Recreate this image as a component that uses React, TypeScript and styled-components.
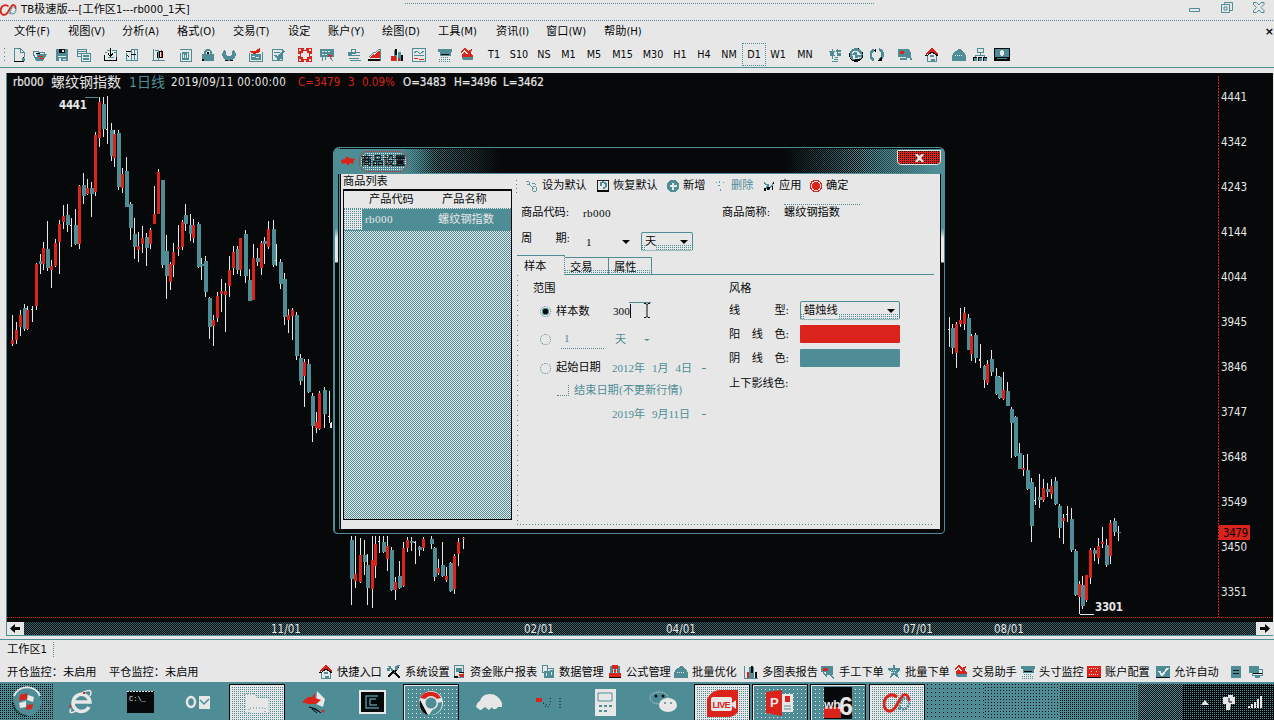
import React from 'react';
import styled, { createGlobalStyle, css } from 'styled-components';

const INK = '#060809';
const TEAL = '#4f8d96';
const PAPER = '#e7e7e7';
const RED = '#da231b';
const checker = (a: string, b: string) =>
  `repeating-conic-gradient(${a} 0 25%, ${b} 0 50%) 0 0 / 2px 2px`;
const dots = (c: string, size: number) =>
  `conic-gradient(at 1px 1px, transparent 75%, ${c} 0) 0 0 / ${size}px ${size}px`;
const dotLine = (c: string) => `repeating-linear-gradient(90deg, ${c} 0 1px, transparent 1px 2px)`;
const dotColumn = (c: string) => `repeating-linear-gradient(180deg, ${c} 0 1px, transparent 1px 2px)`;
const UI = "'DejaVu Sans Condensed', 'Noto Sans CJK SC', sans-serif";
const DIGITS = "11.2px/14px 'Liberation Serif', 'Noto Sans CJK SC', serif";

const Global = createGlobalStyle`
  * { box-sizing: border-box; }
  body { margin: 0; overflow: hidden; background: ${PAPER}; }
`;

/* ---------- icons ---------- */

const T = (d: string) => <path d={d} fill={TEAL} />;
const K = (d: string) => <path d={d} fill={INK} />;
const R = (d: string) => <path d={d} fill={RED} />;
const W = (d: string) => <path d={d} fill={PAPER} />;
const L = (d: string, c = TEAL, w = 1) => <path d={d} fill="none" stroke={c} strokeWidth={w} />;

const icons: Record<string, React.ReactNode> = {
  newFile: <>{L('M3.500 14.500v-13h6l4 4v4')}{L('M9.500 1.500v4h4')}{L('M3 14.500h9.500v-5', INK)}{T('M11 11h3v3h-3z')}</>,
  open: <>{L('M1.500 8v-4h4l1 1h6v3')}{K('M3 6h4l2 1h-4z')}{T('M1 8h2v2h2v-3h10l-4 7h-7z')}{R('M6 9h5v1h-5zM8 11h4v1h-4z')}</>,
  save: <>{T('M2 2h12v12h-12z')}{K('M5 2h6v4h-6z')}{W('M8 3h2v2h-2zM4 9h8v1H4z')}{W('M5 11h2v3h-2zM9 12h3v1H9z')}</>,
  copy: <>{L('M1.500 2.500h9v7h-9z', TEAL, 1)}{L('M2 4.500h8M2 6.500h8')}<rect x="5.500" y="6.500" width="9" height="8" fill={PAPER} stroke={TEAL} />{T('M7 8h6v2h-6zM7 11h6v2h-6z')}</>,
  inTray: <>{L('M1.500 8v5.500h12V8', INK)}{L('M2 5.500h2M11 5.500h3M3.500 3.500h3M9 3.500h4v6')}{L('M7.500 1v8M5 6.500l2.500 3l2.500-3', INK)}{T('M5 10h6v1h-6z')}</>,
  panes: <>{L('M1.500 4.500h6M2 7l3 3', INK)}{L('M7.500 2.500h6v11h-6zM10.500 3v11M2.500 6v7h5')}{K('M7 7h5v1h-5z')}</>,
  bars: <>{L('M2.500 2v12M1 13.500h13M4 3h3v10')}{R('M10 3h1v8h-1z')}{L('M8.500 4.500h3v6h-3z', INK)}{L('M6.500 5v6', INK)}</>,
  grid: <>{L('M2 2.500h11.500v12')}{L('M2.500 6v8h10')}{T('M4 5h7v8h-7z')}{W('M5 7h1v4h-1zM7 8h1v3h-1zM9 6h1v5H9z')}</>,
  lock: <>{T('M2 7h12v7H2z')}{T('M4 8V5l2-3h4l2 3v3h-2V5L9 4H7L6 5v3z')}{K('M7 5h2v2h-2zM2 12h2v2h-2z')}</>,
  ring: <>{T('M3 3Q-1 9 4 13q4 3 8 0 5-4 1-10l-2 1q1 5-3 5t-3-5z')}{K('M4 13h3v1H4zM9 13h3v1H9z')}</>,
  edit: <>{R('M1 4h6l5-3v4l-6 2z')}{L('M1.500 6v8h13V5')}{T('M3 7h10v6H3z')}{W('M4 9h3v1h-3zM8 10h3v1h-3z')}</>,
  note: <>{L('M2.500 2.500h10v11h-10z')}{L('M4 5.500h6M4 8.500h3')}{L('M7 11l7-7M5 8l4 5', TEAL, 2)}{T('M9 8h4v4H9z')}</>,
  flower: <>{R('M1 1h14v14H1z')}<g fill={PAPER}><rect x="6" y="4" width="4" height="8" /><rect x="4" y="6" width="8" height="4" /><circle cx="3" cy="3" r=".7" /><circle cx="8" cy="2" r=".7" /><circle cx="13" cy="3" r=".7" /><circle cx="2" cy="8" r=".7" /><circle cx="14" cy="8" r=".7" /><circle cx="3" cy="13" r=".7" /><circle cx="8" cy="14" r=".7" /><circle cx="13" cy="13" r=".7" /></g></>,
  board: <>{T('M1 2h14v8H1z')}{W('M3 4h2v1H3zM6 4h2v1H6zM9 4h2v1H9zM3 7h2v1H3zM6 7h2v1H6z')}{R('M9 8h4v2H9z')}{L('M10 9l4 5M3.500 10v4M6.500 10v3')}</>,
  slider: <>{L('M5 2.500h4v4H5zM2 5.500h12M2 8.500h12M3 11.500h10M3.500 13.500h11')}{T('M2 6h4v3H2z')}</>,
  area: <>{K('M1 12h13v2H1z')}{R('M2 11l4-4 2 1 3-4h2v7z')}{L('M2 10l4-4 3-1 3-3h1.500v12')}</>,
  histogram: <>{T('M5 3h3v11H5zM9 5h3v9H9z')}{K('M6 2h2v6H6zM12 8h2v6h-2z')}{R('M2 9h5v5H2zM9 11h2v3H9z')}</>,
  trend: <>{L('M1.500 1.500h13v13h-13z')}{L('M3 6l3-2 3 3 4-3M3 8.500h10')}{R('M3 11h4v1H3zM8 12h5v1H8z')}</>,
  screen: <>{T('M1 2h14v3H1zM3 5h11v4H3z')}{K('M4 7h8v1H4z')}<path d="M4 10.500h8M2 12.500h12M2 14.500h12" stroke={TEAL} strokeDasharray="1 1" /></>,
  heart: <>{L('M2 5l4-3 3 3 4-2', RED, 1.500)}{R('M3 7l2-2 3 3 3-4 3 5v1H3z')}{T('M3 10h11v3H4z')}</>,
  transfer: <>{L('M5.500 2v10M2 4.500h6M3 8h5M8 10h3M10 2v6h4')}{T('M3 5h4v4H3zM9 3h5v2H9zM10 6h4v3h-4z')}{L('M5 14.500h6M7 12.500h4')}</>,
  refresh: <>{K('M8 1a7 7 0 1 0 .1 0')}{T('M8 1a6.500 6.500 0 1 0 .1 0')}{L('M4 6a5 4 0 0 1 6-1M12 10a5 4 0 0 1-7 1', PAPER, 1.500)}{W('M9 3v5h4zM3 8h4v4z')}{K('M7 12h5v2H6z')}</>,
  sync: <>{L('M5 3a5.500 5.500 0 0 0 0 10M10 2.500a5.500 5.500 0 0 1 1 10', TEAL, 2.500)}{K('M4 3l3-1 0 3zM8 14l5-4v4z')}</>,
  chartUser: <>{T('M1 2h11v8H1z')}{R('M3 4h4v3H3z')}{L('M12 3l-3 10M12 6l2 7M3 12h5', TEAL, 2)}{T('M10 5h4v6h-4z')}</>,
  home: <>{R('M2 6l6-5 6 5v2l-6-3-6 3z')}{L('M1 8h3l4-3 6 4', INK)}{L('M3.500 9v5h9V9')}{T('M6 8h4v2H6zM7 12h4v2H7z')}</>,
  cap: <>{T('M1 14V10q1-5 4-6l2-2h2l2 2q3 1 4 6v4z')}<path d="M4 8.500h8" stroke={PAPER} strokeDasharray="1 1" /></>,
  network: <>{L('M5 1.500h6v4H5zM8 5v3M3.500 10V8.500h9V10')}{K('M1 10h4v4H1zM6 10h4v4H6zM11 10h4v4h-4z')}{T('M2 11h3v3H2zM7 11h3v3H7zM12 11h3v3h-3z')}</>,
  monitor: <>{K('M0 1h16v13H0z')}{T('M1 2h14v8H1z')}{W('M6 4h4v4H6zM7 3h2v6H7z')}{T('M3 11h10v1H3z')}</>,
  tools: <>{L('M3 2l4 5M13 1L9 7l-1 3', TEAL, 2)}{L('M2 13l6-6M9 9l5 5M12 3l-3 5', INK, 1.500)}{T('M9 2h3v4H9zM1 4h3v3H1z')}</>,
  report: <>{L('M3.500 1.500h9v12h-9z', TEAL, 1.500)}{T('M5 4h6v4H5z')}{K('M3 12h4v2H3zM8 8h5v1H8z')}{R('M8 10h5v3H9z')}</>,
  data: <>{L('M2.500 1.500h5v7h-5zM7.500 4.500h6v9h-6z')}{T('M4 7h6v7H4zM10 6h3v7h-3z')}{W('M6 9h1v3H6zM11 8h1v3h-1z')}</>,
  formula: <>{T('M3 2h10v9H3z')}{R('M5 1h6v4H5zM5 6h6v2H5zM2 9h12v4H2z')}{W('M6 5h1v4H6zM9 5h1v4H9z')}{K('M2 13h12v1H2z')}</>,
  multi: <>{L('M1.500 2v12h13')}{T('M6 3h5v11H6z')}{R('M4 8h2v6H4z')}{K('M8 2h2v7H8zM12 8h2v6h-2z')}</>,
  order: <>{T('M1 2h12v6H1zM6 7h7v4H6z')}{R('M3 4h5v3H3z')}{L('M9 10l5 4M3 9l4 3', TEAL, 1.500)}</>,
  batch: <>{T('M7 1h2v3h5v3l-3 2 2 5-5-3-4 3 2-6-4-2V4h5z')}<path d="M5 6.500h6M6 8.500h4" stroke={PAPER} strokeDasharray="1 1" /></>,
  gearCard: <>{R('M1 2h14v11H1z')}<path d="M3 4.500h10M3 10.500h10" stroke={PAPER} strokeDasharray="1 1" />{W('M5 7h1v1H5zM10 7h1v1h-1z')}{K('M1 13h14v1H1z')}</>,
  check: <>{T('M1 2h14v12H1z')}{L('M4 7l3 4 6-7', PAPER, 2)}{K('M1 13h14v1H1z')}</>,
  server: <>{T('M3 2h10v12H3z')}{K('M5 6h6v1H5zM5 9h6v1H5z')}</>,
  pc: <>{L('M1.500 2.500h9v6h-9zM4.500 5.500h10v6h-10z')}{T('M2 3h9v5H2zM7 12h5v2H7z')}{K('M5 9h9v1H5z')}</>,
  pin: <>{L('M1 3h4v3H2M5 6l5 5M8 5l5 1M9 9h4v5h-4z')}</>,
  restore: <>{L('M1.500 1.500h13v13h-13z', INK)}{K('M1 12h14v3H1z')}{L('M5.500 8V5l2.500-2 3 2v4l-3 2', TEAL, 2)}</>,
  plus: <><circle cx="8" cy="8" r="7" fill={TEAL} />{W('M7 4h2v8H7zM4 7h8v2H4z')}</>,
  remove: <>{L('M2 3l2 2M6 2l1 3M10 3l2 2M4 7l3 2M7.500 11v3', TEAL)}</>,
  apply: <>{L('M2 4l4 3M3 13l4-6 1 5 5-7', TEAL, 1.500)}{K('M2 10h3v4H2zM6 9h3v2l-3 2zM11 8h2v5h-2zM12 3h2v3h-2z')}</>,
  ok: <><circle cx="8" cy="8" r="6.500" fill="none" stroke={RED} strokeWidth="1.500" /><circle cx="8" cy="8" r="4.500" fill={RED} /></>,
};

const IconSvg = styled.svg<{ $size: number }>`
  display: block;
  flex: none;
  width: ${p => p.$size}px;
  height: ${p => p.$size}px;
  overflow: visible;
`;

const Icon = ({ name, size = 16 }: { name: string; size?: number }) => (
  <IconSvg $size={size} viewBox="0 0 16 16" shapeRendering="crispEdges">{icons[name]}</IconSvg>
);

const Loops = ({ w, h }: { w: number; h: number }) => (
  <svg width={w} height={h} viewBox="0 0 28 22" fill="none">
    <path d="M14 5C8 0 1 5 1 12s6 9 10 5 4-9 9-13" stroke={RED} strokeWidth="3" />
    <path d="M17 15c3 5 9 1 9-4s-4-8-7-3-2 8-4 10" stroke={TEAL} strokeWidth="2.500" strokeDasharray="2 1" />
    <path d="M19 4c3-3 7-1 7 5" stroke={RED} strokeWidth="2.500" />
  </svg>
);

/* ---------- application frame ---------- */

const Frame = styled.div`
  width: 1274px;
  height: 720px;
  display: flex;
  flex-direction: column;
  background: ${PAPER};
  color: ${INK};
  font: 11.2px/16px ${UI};
  white-space: nowrap;
  overflow: hidden;
`;

const TitleBar = styled.div`
  height: 21px;
  display: flex;
  align-items: flex-start;
  padding-top: 2px;
  background: ${dotLine(TEAL)} 0 20px / 100% 1px no-repeat;
`;
const TitleText = styled.span`
  width: 384px;
  margin-left: 4px;
`;
const TitleTab = styled.div`
  width: 469px;
  height: 2px;
  background: ${dotLine(TEAL)} 0 1px / 100% 1px no-repeat;
`;
const WindowButtons = styled.div`
  margin-left: 315px;
  display: flex;
  gap: 20px;
`;

const MenuBar = styled.div`
  height: 22px;
  display: flex;
  align-items: center;
  padding: 1px 0 0 14px;
`;
const MenuItem = styled.span<{ $w: number }>`
  width: ${p => p.$w}px;
`;
const MenuClose = styled.span`
  margin-left: auto;
  font: bold 11px/16px 'DejaVu Sans';
`;

const ToolBar = styled.div`
  height: 25px;
  display: flex;
  align-items: center;
  padding-left: 5px;
  border-bottom: 1px solid ${TEAL};
`;
const Grip = styled.div`
  width: 1px;
  height: 13px;
  margin-right: 5px;
  margin-left: -1px;
  background: repeating-linear-gradient(180deg, ${TEAL} 0 1px, transparent 1px 4px);
`;
const Tool = styled.span<{ $gap: number }>`
  margin-left: ${p => p.$gap}px;
`;
const Periods = styled.div`
  display: flex;
  margin-left: 7px;
  font: 9.600px/21px 'DejaVu Sans', sans-serif;
`;
const Period = styled.span<{ $w: number; $on?: boolean }>`
  width: ${p => p.$w}px;
  height: 23px;
  text-align: center;
  border: 1px ${p => (p.$on ? `dotted ${TEAL}` : 'solid transparent')};
`;

/* ---------- chart ---------- */

const ChartPanel = styled.div`
  height: 563px;
  margin: 5px 1px 0 6px;
  border-left: 1px solid ${TEAL};
  border-bottom: 1px solid ${TEAL};
  background: ${INK};
`;
const ChartHead = styled.div`
  height: 17px;
  display: flex;
  align-items: center;
  padding: 2px 0 0 6px;
  color: ${PAPER};
  font: 11.5px/17px ${UI};
`;
const HeadText = styled.span<{ $w: number; $color?: string; $size?: number; $strong?: boolean; $loose?: boolean }>`
  width: ${p => p.$w}px;
  color: ${p => p.$color ?? PAPER};
  ${p => p.$size && css`font-size: ${p.$size}px;`}
  ${p => p.$strong && css`-webkit-text-stroke: 0.2px ${PAPER};`}
  ${p => p.$loose && css`letter-spacing: 0.3px;`}
`;
const Plot = styled.svg`
  display: block;
  overflow: visible;
  font: 11.5px ${UI};
`;
const TimeBar = styled.div`
  height: 13px;
  display: flex;
  align-items: center;
  background: ${checker('#38646b', INK)};
  color: ${PAPER};
  font: 11.5px/15px ${UI};
`;
const ScrollArrow = styled.div`
  width: 17px;
  height: 13px;
  background: ${PAPER};
  display: flex;
  justify-content: center;
  align-items: center;
`;
const RightArrow = styled(ScrollArrow)`
  margin-left: auto;
`;
const TimeLabel = styled.span<{ $gap: number }>`
  margin-left: ${p => p.$gap}px;
  padding-top: 2px;
  width: 30px;
`;

type Candle = [number, number, number, number, number, string];
const parse = (s: string): Candle[] =>
  s.trim().split(/\s+/).map(t => {
    const p = t.split(',');
    return [+p[0], +p[1], +p[2], +p[3], +p[4], p[5]] as Candle;
  });

/* x, high, low, body top, body bottom, kind — in thirds of a pixel from each section's origin */
const rally = parse(`
38,675,768,750,762,r 49,697,762,720,750,r 61,660,738,675,711,r 73,642,723,654,717,t 84,648,720,660,717,r
97,648,696,657,660,w 109,520,660,522,648,r 121,492,552,514,521,t 132,456,540,474,521,r 144,393,543,477,534,t
156,510,594,528,540,r 167,447,530,459,528,r 179,390,552,402,456,r 191,345,417,378,396,r 203,342,426,375,405,t
214,384,471,405,408,w 227,357,465,405,462,t 239,285,477,288,462,r 250,249,342,285,318,t 262,267,315,293,312,r
275,276,380,293,312,t 286,126,318,135,306,r 298,20,171,36,144,r 310,22,141,42,117,t 322,18,162,117,121,w
334,99,213,120,198,t 345,120,231,132,204,r 357,120,300,130,291,t 369,234,308,252,294,r 381,201,351,243,350,t
392,336,450,342,414,t 405,384,507,432,471,t 417,426,516,468,480,r 429,408,488,444,462,r 440,429,528,441,474,t
452,414,477,420,462,r 464,288,402,372,402,r 476,237,372,246,372,r 487,270,534,270,525,t 500,435,627,483,558,t
511,516,600,522,576,r 522,459,560,486,525,r 535,405,498,472,477,r 547,390,480,396,472,r 558,342,423,375,402,t
571,372,453,405,432,t 582,387,459,405,444,r 595,396,534,402,530,t 606,504,570,521,527,t 618,498,621,513,606,t
630,621,747,624,711,t 642,675,768,690,708,r 653,606,696,618,684,r 666,567,666,603,611,r 678,579,726,603,615,r
689,498,621,540,588,r 700,468,554,486,534,r 712,468,552,477,540,t 723,444,558,444,540,r 736,420,579,432,558,t
748,537,633,570,632,t 760,462,630,504,629,r 772,474,528,504,516,t 784,453,554,459,534,r 795,441,522,453,462,t
807,393,477,417,471,r 820,390,530,417,525,t 831,462,528,510,514,w 843,507,597,516,582,t 855,549,705,568,681,t
866,657,729,675,690,r 879,654,750,660,678,r 891,666,810,675,798,t`);
const slump = parse(`
201,0,57,0,48,t 212,42,135,54,123,t 225,57,201,66,108,r 236,57,159,72,156,t 248,159,306,168,258,t
260,216,279,246,264,r 269,154,270,160,268,r 283,141,264,150,222,t 298,153,249,228,231,w 305,246,264,249,264,w
366,588,795,600,717,t 378,588,744,702,723,r 391,594,729,645,726,r 403,600,705,645,666,t 413,642,795,675,744,t
427,588,804,660,747,r 438,588,714,612,678,r 448,588,640,604,607,w 460,588,638,606,636,t 472,588,693,618,656,r
485,621,752,630,750,t 497,711,780,726,750,r 508,663,747,708,744,t 520,606,741,624,738,r 532,591,636,600,624,r
544,591,633,603,610,t 556,603,672,606,609,w 568,618,648,622,630,t 580,591,633,597,624,r 604,588,627,598,612,t
615,621,723,624,711,t 627,657,705,684,699,r 639,606,711,675,708,t 651,681,726,708,720,r 663,666,756,668,754,t
675,642,762,648,747,r 686,594,678,606,641,r 700,591,627,594,598,r`);
const decline = parse(`
58,81,171,117,120,w 68,102,192,114,174,t 80,96,234,102,190,r 92,54,111,90,102,r 105,51,120,69,102,r
116,72,180,84,180,t 126,132,213,138,192,r 138,129,219,135,204,t 151,162,234,207,212,w 164,225,294,228,270,t
174,210,285,222,279,r 186,180,258,207,246,t 199,234,315,258,312,t 210,258,327,262,325,t 222,246,330,300,327,r
234,276,348,303,348,t 246,351,504,357,399,t 257,378,501,381,498,t 269,459,537,489,537,t 282,495,558,535,540,r
294,492,600,540,597,t 304,564,756,576,708,t 316,591,645,629,633,w 330,552,654,621,630,t 342,567,636,594,630,r
352,579,621,597,606,t 364,567,627,588,612,r 377,561,645,573,642,t 388,642,744,648,714,t 400,672,762,684,692,r
412,648,696,672,675,w 424,654,786,687,780,t 436,777,918,783,916,t 448,873,972,882,921,r 459,858,957,885,948,t
470,855,936,855,930,r 482,774,882,780,864,r 494,774,813,780,792,t 506,744,822,768,804,r 518,711,774,755,762,r
530,747,830,765,826,t 542,690,822,699,798,r 554,684,738,693,726,t 566,708,753,726,729,t`);

const Candles = ({ x, y, data }: { x: number; y: number; data: Candle[] }) => (
  <g transform={`translate(${x} ${y}) scale(0.33333)`} shapeRendering="crispEdges">
    {data.map(([cx, hi, lo, top, bottom, kind]) => {
      const wide = kind === 't' ? 11 : kind === 'r' ? 10 : 6;
      const left = Math.floor((cx - 4) / 3) * 3;
      return (
        <g key={`${cx}-${hi}`}>
          <rect x={left + 3} y={hi} width="3" height={lo - hi} fill={PAPER} />
          <rect x={left} y={top} width={wide} height={bottom - top} fill={kind === 'r' ? RED : kind === 't' ? TEAL : PAPER} />
        </g>
      );
    })}
  </g>
);

const prices = [4441, 4342, 4243, 4144, 4044, 3945, 3846, 3747, 3648, 3549, 3450, 3351];

const PricePlot = () => (
  <Plot width="1266" height="532" viewBox="7 90 1266 532">
    <Candles x={0} y={90} data={rally} />
    <Candles x={230} y={340} data={slump} />
    <Candles x={930} y={290} data={decline} />
    <g fill="none" shapeRendering="crispEdges">
      <path d="M85 97.500h13" stroke={TEAL} />
      <path d="M1080 614.500h14" stroke={PAPER} />
      <path d="M1218.500 76V617" stroke={RED} strokeDasharray="2 1" />
      <path d="M7 617.500H1273" stroke={RED} strokeDasharray="1 1" />
    </g>
    <g fill={PAPER} fontWeight="bold">
      <text x="59" y="109" textLength="28">4441</text>
      <text x="1095" y="611" textLength="28">3301</text>
    </g>
    <rect x="1219" y="525" width="31" height="15" fill={RED} />
    <text x="1223" y="537" fill={INK} textLength="25">3479</text>
    <g fill={PAPER}>
      {prices.map((p, i) => (
        <text key={p} x="1221" y={101 + i * 45} textLength="26">{p}</text>
      ))}
    </g>
  </Plot>
);

/* ---------- bottom strips ---------- */

const SheetBar = styled.div`
  height: 20px;
  margin-top: 3px;
  border-top: 1px solid ${TEAL};
  display: flex;
`;
const Sheet = styled.div`
  width: 55px;
  padding: 2px 0 0 7px;
  background: ${dotColumn(TEAL)} 53px 2px / 1px 16px no-repeat;
`;
const StatusBar = styled.div`
  height: 24px;
  display: flex;
  align-items: center;
  padding: 3px 0 0 7px;
`;
const Monitor = styled.span<{ $w: number }>`
  width: ${p => p.$w}px;
  padding-top: 2px;
`;
const StatusItem = styled.span<{ $w: number }>`
  width: ${p => p.$w}px;
  display: flex;
  align-items: center;
  gap: 3px;
  line-height: 18px;
`;
const StatusText = styled.span`
  padding-top: 2px;
`;

const TaskBar = styled.div`
  height: 38px;
  display: flex;
  border-top: 2px solid ${TEAL};
  background: ${TEAL};
`;
const StartArea = styled.div`
  flex: none;
  width: 54px;
  display: flex;
  justify-content: center;
  align-items: center;
  background: ${dots(INK, 2)};
`;
const Task = styled.div<{ $look?: 'light' | 'teal' }>`
  flex: none;
  width: 56px;
  margin-right: 2.2px;
  display: flex;
  justify-content: center;
  align-items: center;
  ${p => p.$look && css`
    border: 1px solid ${INK};
    border-bottom: 0;
    box-shadow: inset 1px 1px 0 ${PAPER};
    background: ${p.$look === 'light' ? `${dots(TEAL, 2)}, ${PAPER}` : `${dots(PAPER, 4)}, ${TEAL}`};
  `}
`;
const TaskFade = styled.div<{ $w: number; $bg: string }>`
  flex: none;
  width: ${p => p.$w}px;
  background: ${p => p.$bg};
`;
const Tray = styled.div`
  flex: 1;
  display: flex;
  align-items: center;
  gap: 13px;
  padding-left: 19px;
  background: ${dots(TEAL, 2)}, ${INK};
`;

/* ---------- dialog ---------- */

const DialogFrame = styled.div`
  position: absolute;
  left: 333px;
  top: 147px;
  width: 612px;
  height: 387px;
  padding: 1px 4px 5px 7px;
  border: 1px solid ${TEAL};
  border-radius: 6px 6px 4px 4px;
  background:
    linear-gradient(${TEAL} 0 80px, ${PAPER} 90px 114px, ${INK} 115px) 1px 0 / 3px 100% no-repeat,
    linear-gradient(${TEAL} 0 80px, ${PAPER} 90px 114px, ${INK} 115px) 607px 0 / 3px 100% no-repeat,
    linear-gradient(${TEAL}, ${TEAL}) 5px 0 / 1px 381px no-repeat,
    ${INK};
  box-shadow: inset 1px 0 0 ${TEAL};
`;
const DialogTitle = styled.div`
  height: 25px;
  margin: 0 -4px 0 -6px;
  display: flex;
  align-items: center;
  padding-left: 6px;
  gap: 5px;
  background:
    linear-gradient(90deg, ${TEAL} 0 68px, transparent 100px),
    linear-gradient(90deg, transparent 80px, ${INK} 165px 450px, transparent 530px),
    linear-gradient(90deg, transparent 520px, ${TEAL} 600px),
    ${checker(TEAL, INK)};
  border-bottom: 1px solid ${TEAL};
`;
const DialogName = styled.span`
  line-height: 17px;
  border-radius: 6px;
  outline: 1px dotted ${RED};
  outline-offset: 1px;
  background: ${dots(PAPER, 2)};
  -webkit-text-stroke: 0.3px ${INK};
`;
const DialogClose = styled.div`
  width: 44px;
  height: 15px;
  margin: -7px 3px 0 auto;
  display: flex;
  align-items: center;
  justify-content: center;
  border: 1px solid ${PAPER};
  border-radius: 0 0 4px 4px;
  background: ${dots(INK, 2)}, ${RED};
`;
const DialogBody = styled.div`
  height: 355px;
  display: flex;
  background: ${PAPER};
`;
const ListSide = styled.div`
  width: 171px;
  padding-left: 2px;
  line-height: 15px;
`;
const ListBox = styled.div`
  width: 169px;
  height: 331px;
  border: 1px solid ${INK};
  border-top-width: 2px;
  background: ${checker(TEAL, PAPER)};
`;
const ListRow = styled.div<{ $selected?: boolean }>`
  height: ${p => (p.$selected ? 22 : 18)}px;
  display: grid;
  grid-template-columns: 18px 76px 1fr;
  align-items: center;
  background: ${p => (p.$selected ? TEAL : PAPER)};
  color: ${p => (p.$selected ? PAPER : INK)};
  border-bottom: 1px ${p => (p.$selected ? 'solid' : 'dotted')} ${TEAL};
`;
const RowMark = styled.span`
  align-self: stretch;
  background: ${dots(TEAL, 2)}, ${PAPER};
`;
const HeadCell = styled.span<{ $pad: number }>`
  padding: 0 0 1px ${p => p.$pad}px;
`;
const Mono = styled.span`
  font: ${DIGITS};
  letter-spacing: 0.35px;
`;
const CodeCell = styled(Mono)`
  padding-left: 3px;
  margin-top: -2px;
`;

const FormSide = styled.div`
  flex: 1;
  padding-left: 5px;
  display: flex;
  flex-direction: column;
`;
const FormTools = styled.div`
  height: 24px;
  display: flex;
  align-items: center;
  line-height: 18px;
`;
const FormTool = styled.span<{ $w: number; $off?: boolean }>`
  flex: none;
  width: ${p => p.$w}px;
  display: flex;
  align-items: center;
  gap: 3px;
  color: ${p => (p.$off ? TEAL : INK)};
`;
const Line = styled.div<{ $cols: string; $h: number; $off?: boolean }>`
  display: grid;
  grid-template-columns: ${p => p.$cols};
  align-items: center;
  height: ${p => p.$h}px;
  color: ${p => (p.$off ? TEAL : INK)};
`;
const Spread = styled.span<{ $w: number; $raised?: boolean }>`
  width: ${p => p.$w}px;
  padding-top: ${p => (p.$raised ? 0 : 2)}px;
  margin-top: ${p => (p.$raised ? -4 : 0)}px;
  display: flex;
  justify-content: space-between;
`;
const PlainLabel = styled.span`
  padding-top: 3px;
`;
const Select = styled.div<{ $w: number; $bare?: boolean }>`
  width: ${p => p.$w}px;
  height: 19px;
  display: flex;
  align-items: center;
  justify-content: space-between;
  padding: 1px 4px 0 3px;
  ${p => !p.$bare && css`
    border: 1px solid ${TEAL};
    border-bottom-style: dotted;
    border-radius: 2px;
    background: linear-gradient(${PAPER} 0 11px, transparent 11px), ${dots(TEAL, 2)};
  `}
`;
const SelectText = styled.span`
  background: ${PAPER};
`;
const Arrow = styled.i`
  border: 4px solid transparent;
  border-top-color: ${INK};
  border-bottom: 0;
`;
const SmallArrow = styled.i`
  justify-self: start;
  border: 3px solid transparent;
  border-top: 2px solid ${TEAL};
  border-bottom: 0;
`;
const Dash = styled.i`
  width: 4px;
  height: 1px;
  background: ${TEAL};
`;
const Tabs = styled.div`
  display: flex;
  align-items: flex-end;
  height: 20px;
  border-bottom: 1px solid ${TEAL};
  margin-right: 6px;
`;
const Tab = styled.div<{ $w: number; $on?: boolean }>`
  width: ${p => p.$w}px;
  height: ${p => (p.$on ? 20 : 17)}px;
  margin-bottom: ${p => (p.$on ? -1 : 0)}px;
  padding-left: ${p => (p.$on ? 7 : 5)}px;
  line-height: ${p => (p.$on ? 22 : 19)}px;
  border-top: 1px solid ${TEAL};
  border-right: 1px ${p => (p.$on ? 'dotted' : 'solid')} ${TEAL};
  background: ${p => (p.$on ? PAPER : `linear-gradient(${PAPER} 0 11px, transparent 11px), ${dots(TEAL, 2)}`)};
`;
const TabPage = styled.div`
  flex: 1;
  margin: 0 6px 4px 0;
  display: grid;
  grid-template-columns: 212px 1fr;
  background: repeating-linear-gradient(90deg, ${TEAL} 0 1px, transparent 1px 3px) 0 100% / 100% 1px no-repeat,
    repeating-linear-gradient(180deg, ${TEAL} 0 1px, transparent 1px 5px) 0 0 / 1px 100% no-repeat;
`;
const Group = styled.div`
  padding-top: 1px;
`;
const GroupTitle = styled.div<{ $left: number; $h: number }>`
  height: ${p => p.$h}px;
  line-height: 26px;
  padding-left: ${p => p.$left}px;
`;
const Radio = styled.span<{ $on?: boolean }>`
  width: 11px;
  height: 11px;
  border: 1px dotted ${TEAL};
  border-radius: 50%;
  background: ${p => (p.$on ? `radial-gradient(circle, ${INK} 0 2.500px, ${TEAL} 3px 3.500px, transparent 4px)` : 'none')};
`;
const CheckBox = styled.span`
  width: 12px;
  height: 11px;
  border-bottom: 1px dotted ${TEAL};
  border-right: 1px dotted ${TEAL};
`;
const Field = styled.span<{ $w: number }>`
  width: ${p => p.$w}px;
  height: 19px;
  padding: 1px 0 0 3px;
  border-bottom: 1px dotted ${TEAL};
  font: ${DIGITS};
`;
const CountInput = styled.span`
  width: 38px;
  height: 19px;
  display: flex;
  align-items: center;
  justify-content: space-between;
  padding-bottom: 2px;
  background: linear-gradient(90deg, ${TEAL}, ${TEAL}) 16px 0 / 22px 1px no-repeat;
  font: ${DIGITS};
`;
const Caret = styled.span`
  border-right: 1px solid ${INK};
`;
const DateText = styled.span`
  display: flex;
  gap: 7px;
  color: ${TEAL};
  font: ${DIGITS};
  font-size: 11px;
`;
const Swatch = styled.span<{ $color: string }>`
  width: 100px;
  height: 18px;
  border-radius: 1px;
  background: ${p => p.$color};
`;
const Hint = styled.span`
  border-top: 1px dotted ${TEAL};
  width: 76px;
`;

const SettingsDialog = () => (
  <DialogFrame>
    <DialogTitle>
      <svg width="15" height="12" viewBox="0 0 15 12"><path d="M0 5l4-1 2-3 2 2 6 1-2 3 1 2-4-1-2 3-2-3-4 1z" fill={RED} /></svg>
      <DialogName>商品设置</DialogName>
      <DialogClose>
        <svg width="9" height="8" viewBox="0 0 9 8"><path d="M1 0l7 8M8 0L1 8" stroke={PAPER} strokeWidth="2.500" /></svg>
      </DialogClose>
    </DialogTitle>
    <DialogBody>
      <ListSide>
        商品列表
        <ListBox>
          <ListRow><span /><HeadCell $pad={7}>产品代码</HeadCell><HeadCell $pad={4}>产品名称</HeadCell></ListRow>
          <ListRow $selected><RowMark /><CodeCell>rb000</CodeCell><span>螺纹钢指数</span></ListRow>
        </ListBox>
      </ListSide>
      <FormSide>
        <FormTools>
          <FormTool $w={79}><Grip /><Icon name="pin" size={14} />设为默认</FormTool>
          <FormTool $w={70}><Icon name="restore" size={14} />恢复默认</FormTool>
          <FormTool $w={48}><Icon name="plus" size={14} />新增</FormTool>
          <FormTool $w={48} $off><Icon name="remove" size={14} />删除</FormTool>
          <FormTool $w={47}><Icon name="apply" size={14} />应用</FormTool>
          <FormTool $w={50}><Icon name="ok" size={14} />确定</FormTool>
        </FormTools>
        <Line $cols="4px 62px 139px 62px 1fr" $h={29}>
          <span /><span>商品代码:</span><Mono>rb000</Mono><span>商品简称:</span><Hint>螺纹钢指数</Hint>
        </Line>
        <Line $cols="4px 62px 58px 1fr" $h={28}>
          <span /><Spread $w={49} $raised><span>周</span><span>期:</span></Spread>
          <Select $w={51} $bare><Mono>1</Mono><Arrow /></Select>
          <Select $w={52}><SelectText>天</SelectText><Arrow /></Select>
        </Line>
        <Tabs>
          <Tab $w={48} $on>样本</Tab><Tab $w={44}>交易</Tab><Tab $w={43}>属性</Tab>
        </Tabs>
        <TabPage>
          <Group>
            <GroupTitle $left={16} $h={24}>范围</GroupTitle>
            <Line $cols="23px 16px 57px 42px" $h={23}>
              <span /><Radio $on /><span>样本数</span>
              <CountInput>
                <Caret>300</Caret>
                <svg width="8" height="15" viewBox="0 0 8 15"><path d="M1 .5h2l1 1 1-1h2M4 1v13M1 14.500h2l1-1 1 1h2" stroke={INK} fill="none" /></svg>
              </CountInput>
            </Line>
            <Line $cols="23px 21px 51px 43px" $h={32} $off>
              <span /><Radio /><Field $w={43}>1</Field>
              <Select $w={42} $bare>天<SmallArrow /></Select>
            </Line>
            <Line $cols="23px 16px 56px 90px 10px" $h={26}>
              <span /><Radio /><span>起始日期</span>
              <DateText><span>2012年</span><span>1月</span><span>4日</span></DateText><Dash />
            </Line>
            <Line $cols="40px 17px 1fr" $h={19} $off>
              <span /><CheckBox /><span>结束日期(不更新行情)</span>
            </Line>
            <Line $cols="95px 90px 10px" $h={28} $off>
              <span /><DateText><span>2019年</span><span>9月11日</span></DateText><Dash />
            </Line>
          </Group>
          <Group>
            <GroupTitle $left={0} $h={22}>风格</GroupTitle>
            <Line $cols="71px 1fr" $h={24}>
              <Spread $w={60}><span>线</span><span>型:</span></Spread>
              <Select $w={100}><SelectText>蜡烛线</SelectText><Arrow /></Select>
            </Line>
            <Line $cols="71px 1fr" $h={24}>
              <Spread $w={60}><span>阳</span><span>线</span><span>色:</span></Spread><Swatch $color={RED} />
            </Line>
            <Line $cols="71px 1fr" $h={24}>
              <Spread $w={60}><span>阴</span><span>线</span><span>色:</span></Spread><Swatch $color={TEAL} />
            </Line>
            <Line $cols="71px 1fr" $h={24}><PlainLabel>上下影线色:</PlainLabel></Line>
          </Group>
        </TabPage>
      </FormSide>
    </DialogBody>
  </DialogFrame>
);

/* ---------- data ---------- */

const menus: [string, number][] = [
  ['文件(F)', 54], ['视图(V)', 54], ['分析(A)', 55], ['格式(O)', 56], ['交易(T)', 55], ['设定', 40],
  ['账户(Y)', 54], ['绘图(D)', 56], ['工具(M)', 58], ['资讯(I)', 50], ['窗口(W)', 58], ['帮助(H)', 50],
];
const tools: [string, number][] = [
  ['newFile', 1], ['open', 5], ['save', 6], ['copy', 6], ['inTray', 11], ['panes', 5], ['bars', 11], ['grid', 11],
  ['lock', 6], ['ring', 5], ['edit', 11], ['note', 6], ['flower', 11], ['board', 6], ['slider', 11], ['area', 5],
  ['histogram', 6], ['trend', 6], ['screen', 10], ['heart', 6],
];
const periods: [string, number][] = [
  ['T1', 24], ['S10', 26], ['NS', 24], ['M1', 25], ['M5', 26], ['M15', 31], ['M30', 30], ['H1', 24], ['H4', 24],
  ['NM', 26], ['D1', 24], ['W1', 24], ['MN', 30],
];
const moreTools: [string, number][] = [
  ['transfer', 7], ['refresh', 5], ['sync', 5], ['chartUser', 12], ['home', 11], ['cap', 11], ['network', 5], ['monitor', 6],
];
const statusItems: [string, string, number][] = [
  ['home', '快捷入口', 68], ['tools', '系统设置', 65], ['report', '资金账户报表', 89], ['data', '数据管理', 67],
  ['formula', '公式管理', 66], ['cap', '批量优化', 70], ['multi', '多图表报告', 77], ['order', '手工下单', 66],
  ['batch', '批量下单', 67], ['heart', '交易助手', 67], ['screen', '头寸监控', 66], ['gearCard', '账户配置', 69],
  ['check', '允许自动', 73],
];
const times: [string, number][] = [['11/01', 247], ['02/01', 223], ['04/01', 112], ['07/01', 207], ['08/01', 61]];

const taskIcons: [React.ReactNode, ('light' | 'teal')?][] = [
  [<svg width="28" height="26" viewBox="0 0 28 26"><path d="M21 18a8.500 8.500 0 1 1 1-5H7" fill="none" stroke={PAPER} strokeWidth="3.500" /><path d="M3 20C0 24 4 25 9 21M14 4c7-4 11-3 8 3" fill="none" stroke={PAPER} strokeWidth="1.500" /><path d="M15 3h2v2h-2zM1 16h2v2H1z" fill={RED} /></svg>],
  [<svg width="27" height="22" viewBox="0 0 27 22"><rect width="27" height="22" fill={INK} /><path d="M0 .5h27" stroke={PAPER} strokeDasharray="2 1" /><text x="2" y="10" fill={PAPER} fontSize="7" fontFamily="Liberation Mono">C:\_</text></svg>],
  [<svg width="26" height="16" viewBox="0 0 26 16"><ellipse cx="6" cy="8" rx="4" ry="5" fill="none" stroke={PAPER} strokeWidth="2.500" /><path d="M14 2h11v13H14z" fill={PAPER} /><path d="M15 6l4 4 5-5" stroke={TEAL} fill="none" strokeWidth="1.500" /></svg>],
  [<svg width="30" height="26" viewBox="0 0 30 26"><path d="M3 5h10l2 3h12v15H3z" fill={PAPER} /><path d="M3 23V4h10l2 3h12v16M7 23v-5h16v5" fill="none" stroke={TEAL} strokeDasharray="1 2" /></svg>, 'light'],
  [<svg width="28" height="28" viewBox="0 0 28 28"><path d="M16 3l8 8-2 8-7-3z" fill={PAPER} /><path d="M1 14l6-5h4l3-4v5l6 2-5 4H7z" fill={RED} /><path d="M8 19l7 2 5 4M11 21l5 4" stroke={INK} /><path d="M20 22h4l-2 3z" fill={RED} /></svg>],
  [<svg width="27" height="24" viewBox="0 0 27 24"><rect width="27" height="24" fill={PAPER} /><rect x="2" y="2" width="23" height="20" fill={INK} /><path d="M19 6H7v12h13M17 9h-6v6h7" fill="none" stroke={TEAL} strokeWidth="1.500" /></svg>],
  [<svg width="30" height="28" viewBox="0 0 30 28"><circle cx="15" cy="14" r="12" fill={PAPER} /><path d="M4 9a12 12 0 0 1 21 0l-10 2z" fill={RED} /><path d="M4 11l8 15a12 12 0 0 1-8-15" fill={INK} /><path d="M13 26a12 12 0 0 0 13-13l-5 1z" fill={TEAL} /><circle cx="15" cy="14" r="7" fill={PAPER} /><circle cx="15" cy="14" r="5.500" fill={TEAL} /></svg>, 'teal'],
  [<svg width="26" height="18" viewBox="0 0 26 18"><path d="M0 14q1-5 4-6Q6 1 14 1t12 9v4h-4l-2 2h-3l-1-2-3 3-4-3-4 3H4z" fill={PAPER} /></svg>],
  [<svg width="26" height="20" viewBox="0 0 26 20"><path d="M1 6h6v4H1z" fill={RED} /><path d="M8 11l4 2-3 3M15 6q2 5-3 10M25 6v12" fill="none" stroke={INK} strokeDasharray="1 2" /></svg>],
  [<svg width="21" height="27" viewBox="0 0 21 27"><rect width="21" height="27" fill={PAPER} /><path d="M3 4h14v8H3z" fill="none" stroke={TEAL} /><path d="M4 16h3v2H4zM9 16h3v2H9zM14 16h3v2h-3zM4 21h3v2H4zM9 21h3v2H9z" fill={TEAL} /></svg>],
  [<svg width="30" height="24" viewBox="0 0 30 24"><ellipse cx="10" cy="8" rx="9" ry="6" fill={TEAL} stroke={PAPER} strokeDasharray="1 1" /><circle cx="7" cy="6" r="1.500" fill={INK} /><circle cx="14" cy="6" r="1.500" fill={INK} /><ellipse cx="19" cy="15" rx="9" ry="7" fill={PAPER} /><circle cx="16" cy="13" r="1" fill={TEAL} /><circle cx="22" cy="13" r="1" fill={TEAL} /></svg>],
  [<svg width="50" height="32" viewBox="0 0 50 32"><path d="M10 12q5-9 13-9h18v22q-4 5-10 5H10z" fill={RED} /><rect x="14" y="10" width="21" height="14" rx="2" fill={PAPER} /><path d="M35 16l4-3v9l-4-3z" fill={PAPER} /><text x="15.500" y="21" fill={RED} fontSize="9" fontWeight="bold" fontFamily="Liberation Sans" textLength="18">LIVE</text></svg>, 'light'],
  [<svg width="32" height="28" viewBox="0 0 32 28"><path d="M16 5h13v18H16z" fill={PAPER} /><path d="M20 17h7M20 20h7" stroke={TEAL} /><path d="M21 7h5v6h-5z" fill={RED} /><path d="M2 3l16-2v26L2 24z" fill={RED} /><text x="6" y="18" fill={PAPER} fontSize="13" fontWeight="bold" fontFamily="Liberation Sans">P</text></svg>, 'teal'],
  [<svg width="34" height="32" viewBox="0 0 34 32"><path d="M3 0h28v32H3z" fill={INK} /><path d="M3 20h17v11H3z" fill={RED} /><text x="3" y="22" fill={PAPER} fontSize="12" fontWeight="bold" fontFamily="Liberation Sans">wh</text><text x="18" y="28" fill={PAPER} fontSize="25" fontWeight="bold" fontFamily="Liberation Sans">6</text></svg>, 'teal'],
  [<Loops w={28} h={22} />, 'light'],
];

export default function App() {
  return (
    <Frame>
      <Global />
      <TitleBar>
        <Loops w={17} h={16} />
        <TitleText>TB极速版---[工作区1---rb000_1天]</TitleText>
        <TitleTab />
        <WindowButtons>
          <svg width="12" height="14" viewBox="0 0 12 14"><path d="M.5 6.500h10v3H.5z" fill="none" stroke={TEAL} /></svg>
          <svg width="12" height="14" viewBox="0 0 12 14"><path d="M3.500 3V.5h8v8H9M.5 2.500h8v8h-8zM3 5h3v3H3z" fill="none" stroke={TEAL} /></svg>
          <svg width="12" height="14" viewBox="0 0 12 14"><path d="M.5.500h3L6 3l2-2.500h3v2L8 5.500l3 3v2H8L6 8l-2.500 2.500h-3v-2l3-3-3-3z" fill="none" stroke={TEAL} /></svg>
        </WindowButtons>
      </TitleBar>
      <MenuBar>
        {menus.map(([label, w]) => <MenuItem key={label} $w={w}>{label}</MenuItem>)}
        <MenuClose>×</MenuClose>
      </MenuBar>
      <ToolBar>
        <Grip />
        {tools.map(([name, gap]) => <Tool key={name} $gap={gap}><Icon name={name} /></Tool>)}
        <Periods>
          {periods.map(([label, w]) => <Period key={label} $w={w} $on={label === 'D1'}>{label}</Period>)}
        </Periods>
        {moreTools.map(([name, gap]) => <Tool key={name} $gap={gap}><Icon name={name} /></Tool>)}
      </ToolBar>
      <ChartPanel>
        <ChartHead>
          <HeadText $w={38} $strong>rb000</HeadText>
          <HeadText $w={78} $size={14}>螺纹钢指数</HeadText>
          <HeadText $w={42} $size={14} $color={TEAL}>1日线</HeadText>
          <HeadText $w={127} $loose>2019/09/11 00:00:00</HeadText>
          <HeadText $w={50} $color={RED}>C=3479</HeadText>
          <HeadText $w={14} $color={RED}>3</HeadText>
          <HeadText $w={41} $color={RED}>0.09%</HeadText>
          <HeadText $w={51} $strong>O=3483</HeadText>
          <HeadText $w={49} $strong>H=3496</HeadText>
          <HeadText $w={50} $strong>L=3462</HeadText>
        </ChartHead>
        <PricePlot />
        <TimeBar>
          <ScrollArrow><svg width="11" height="9" viewBox="0 0 11 9"><path d="M0 4.500L5 0v3h5v3H5v3z" fill={INK} /></svg></ScrollArrow>
          {times.map(([label, gap]) => <TimeLabel key={label} $gap={gap}>{label}</TimeLabel>)}
          <RightArrow><svg width="11" height="9" viewBox="0 0 11 9"><path d="M11 4.500L6 0v3H1v3h5v3z" fill={INK} /></svg></RightArrow>
        </TimeBar>
      </ChartPanel>
      <SheetBar><Sheet>工作区1</Sheet></SheetBar>
      <StatusBar>
        <Monitor $w={102}>开仓监控：未启用</Monitor>
        <Monitor $w={209}>平仓监控：未启用</Monitor>
        {statusItems.map(([icon, label, w]) => (
          <StatusItem key={label} $w={w}><Icon name={icon} /><StatusText>{label}</StatusText></StatusItem>
        ))}
        <StatusItem $w={20}><Icon name="server" /></StatusItem>
        <StatusItem $w={20}><Icon name="pc" /></StatusItem>
      </StatusBar>
      <TaskBar>
        <StartArea>
          <svg width="32" height="32" viewBox="0 0 32 32"><circle cx="16" cy="16" r="14" fill={TEAL} /><path d="M3 10a14 14 0 0 1 26 0" fill="none" stroke={PAPER} strokeWidth="2" /><path d="M9 9l7-2v6l-8 2z" fill={RED} /><path d="M17 9l6 2-1 5-6-2zM8 17l7-2v6l-6 1z" fill={PAPER} /><path d="M16 19l6-1-1 5-6 1z" fill={RED} /><path d="M2 17q2 11 14 13" fill="none" stroke={INK} strokeWidth="2" strokeDasharray="1 1" /></svg>
        </StartArea>
        {taskIcons.map(([icon, look], i) => <Task key={i} $look={look}>{icon}</Task>)}
        <TaskFade $w={58} $bg={dots(INK, 4)} />
        <TaskFade $w={75} $bg={dots(INK, 3)} />
        <TaskFade $w={78} $bg={dots(INK, 2)} />
        <TaskFade $w={44} $bg={checker(INK, TEAL)} />
        <Tray>
          <svg width="8" height="5" viewBox="0 0 8 5"><path d="M0 5l4-5 4 5z" fill={PAPER} /></svg>
          <svg width="13" height="15" viewBox="0 0 13 15"><path d="M1 2h5v-2h5v2h2v7H9l-1 6H4V9H1z" fill={PAPER} /><path d="M7 3v4h3" stroke={INK} fill="none" /></svg>
          <svg width="14" height="12" viewBox="0 0 14 12"><path d="M0 10h2v2H0zM3 8h2v4H3zM6 6h2v6H6zM9 3h2v9H9zM12 0h2v12h-2z" fill={PAPER} /></svg>
        </Tray>
      </TaskBar>
      <SettingsDialog />
    </Frame>
  );
}
